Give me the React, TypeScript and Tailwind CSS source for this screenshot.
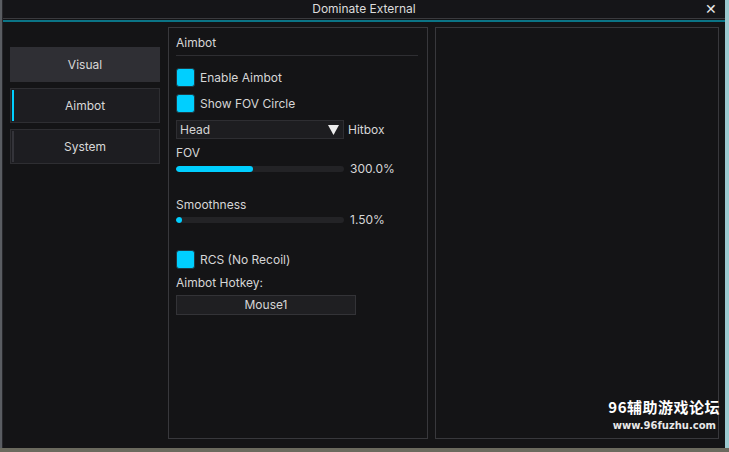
import React from "react";

const font = { fontFamily: "Inter, 'Noto Sans', sans-serif" };

function Check({ label }: { label: string }) {
  return (
    <div className="flex items-center h-[19px]">
      <div className="w-[19px] h-[19px] rounded-[3px] bg-[#00cfff] border border-[#1e3a44]" />
      <span className="ml-[5px] text-[12px] text-[#d6d6d6]">{label}</span>
    </div>
  );
}

function Slider({ label, pct, value, gap }: { label: string; pct: number; value: string; gap: string }) {
  return (
    <div className="flex flex-col">
      <span className="text-[12px] text-[#d6d6d6] leading-[14px]">{label}</span>
      <div className={`flex items-center h-[14px] ${gap}`}>
        <div className="w-[168px] h-[6px] rounded-[3px] bg-[#232326] overflow-hidden">
          <div className="h-full rounded-[3px] bg-[#00cfff]" style={{ width: `${pct}%` }} />
        </div>
        <span className="ml-[6px] text-[12px] text-[#d6d6d6] leading-[14px]">{value}</span>
      </div>
    </div>
  );
}

export default function App() {
  return (
    <div className="w-[729px] h-[452px] bg-[#5a5d62] relative overflow-hidden flex" style={font}>
      <div className="ml-[2px] w-[723px] h-[448px] bg-[#141416] border-l border-[#26262a] flex flex-col">
        <div className="h-[18px] flex items-center justify-between bg-[#151518]">
          <div className="w-[20px]" />
          <span className="text-[12px] text-[#dcdcdc] leading-none">Dominate External</span>
          <span className="w-[20px] text-[14px] text-[#e8e8e8] leading-none">✕</span>
        </div>
        <div className="h-px bg-[#3a3a3e]" />
        <div className="h-px bg-[#141416]" />
        <div className="h-[2px] bg-[#0b7486]" />
        <div className="flex flex-1">
          <div className="w-[165px] pl-[7px] pt-[25px] flex flex-col gap-[6px]">
            <div className="w-[150px] h-[35px] bg-[#2f2f34] flex items-center justify-center text-[12px] text-[#d8d8d8]">
              Visual
            </div>
            <div className="w-[150px] h-[35px] bg-[#1d1d21] border border-[#2e2e32] relative flex items-center justify-center text-[12px] text-[#d8d8d8]">
              <div className="absolute left-[1px] top-[1px] bottom-[1px] w-[2px] bg-[#00cfff]" />
              Aimbot
            </div>
            <div className="w-[150px] h-[35px] bg-[#1d1d21] border border-[#2e2e32] relative flex items-center justify-center text-[12px] text-[#d8d8d8]">
              <div className="absolute left-[1px] top-[1px] bottom-[1px] w-[2px] bg-[#34343a]" />
              System
            </div>
          </div>
          <div className="mt-[5px] mb-[9px] w-[260px] border border-[#38383c] px-[7px] pt-[8px] flex flex-col">
            <span className="text-[12px] text-[#d6d6d6] leading-[14px]">Aimbot</span>
            <div className="mt-[5px] h-px bg-[#2e2e32] w-[242px]" />
            <div className="mt-[12px]">
              <Check label="Enable Aimbot" />
            </div>
            <div className="mt-[7px]">
              <Check label="Show FOV Circle" />
            </div>
            <div className="mt-[7px] flex items-center">
              <div className="w-[168px] h-[19px] bg-[#1d1d20] border border-[#2e2e32] flex items-center justify-between pl-[3px] pr-[4px]">
                <span className="text-[12px] text-[#d6d6d6]">Head</span>
                <svg width="11" height="10" viewBox="0 0 11 10">
                  <path d="M0 0 L11 0 L5.5 10 Z" fill="#ededed" />
                </svg>
              </div>
              <span className="ml-[4px] text-[12px] text-[#d6d6d6]">Hitbox</span>
            </div>
            <div className="mt-[7px]">
              <Slider label="FOV" pct={46} value="300.0%" gap="mt-[2px]" />
            </div>
            <div className="mt-[22px]">
              <Slider label="Smoothness" pct={3.5} value="1.50%" gap="mt-[1px]" />
            </div>
            <div className="mt-[23px]">
              <Check label="RCS (No Recoil)" />
            </div>
            <span className="mt-[7px] text-[12px] text-[#d6d6d6] leading-[14px]">Aimbot Hotkey:</span>
            <div className="mt-[5px] w-[180px] h-[20px] bg-[#1f1f22] border border-[#333337] flex items-center justify-center text-[12px] text-[#d6d6d6]">
              Mouse1
            </div>
          </div>
          <div className="mt-[5px] mb-[9px] ml-[7px] w-[284px] border border-[#38383c]" />
        </div>
      </div>
      <div className="absolute right-0 top-0 w-[4px] h-[448px] bg-[#9cc9cf]" />
      <div className="absolute left-0 right-0 bottom-0 h-[4px] bg-[#6b6a5e]" />
      <div className="absolute right-[9px] top-[399px] flex flex-col items-end">
        <span
          className="text-[15px] font-bold text-white leading-none tracking-[0.5px]"
          style={{ fontFamily: "'Noto Sans CJK SC', 'Noto Sans', sans-serif" }}
        >
          96辅助游戏论坛
        </span>
        <span
          className="mt-[7px] mr-[4px] text-[10px] font-bold text-[#e8e8e8] leading-none"
          style={{ fontFamily: "'DejaVu Sans', sans-serif" }}
        >
          www.96fuzhu.com
        </span>
      </div>
    </div>
  );
}
